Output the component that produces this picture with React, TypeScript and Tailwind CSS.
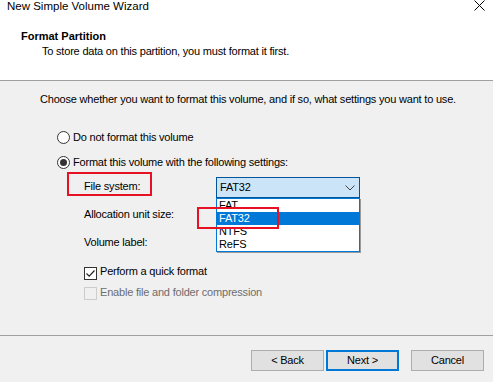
import React from 'react';

const items = ['FAT', 'FAT32', 'NTFS', 'ReFS'];

function Radio({ checked }: { checked?: boolean }) {
	return (
		<span className="w-[13px] h-[13px] rounded-full border border-[#333] bg-white flex items-center justify-center shrink-0">
			{checked && <span className="w-[7px] h-[7px] rounded-full bg-[#333]" />}
		</span>
	);
}

function Check({ checked, disabled }: { checked?: boolean; disabled?: boolean }) {
	return (
		<span
			className={
				disabled
					? 'block w-[13px] h-[13px] border border-[#cccccc] bg-[#f0f0f0] shrink-0'
					: 'flex w-[13px] h-[13px] border border-[#333] bg-white shrink-0 items-center justify-center'
			}
		>
			{checked && (
				<svg width="11" height="11" viewBox="0 0 11 11">
					<path d="M1.5 5.5 L4.2 8.2 L9.5 2.5" fill="none" stroke="#222" strokeWidth="1.2" />
				</svg>
			)}
		</span>
	);
}

export default function App() {
	return (
		<div
			className="relative w-[493px] h-[382px] overflow-hidden bg-[#f0f0f0] text-[11px] leading-[13px] tracking-[-0.2px] text-black flex flex-col"
			style={{ fontFamily: '"Liberation Sans", Arial, sans-serif' }}
		>
			<header className="bg-white h-[81px] border-b border-[#a0a0a0] shrink-0">
				<div className="flex justify-between items-start pl-[7px] pr-[8px] h-[13px]">
					<span className="text-[11.5px] tracking-normal">New Simple Volume Wizard</span>
					<svg width="11" height="11" viewBox="0 0 11 11">
						<path d="M0.5 0.5 L10.5 10.5 M10.5 0.5 L0.5 10.5" stroke="#000" strokeWidth="1" />
					</svg>
				</div>
				<div className="pl-[21px] mt-[17px] font-bold tracking-normal">Format Partition</div>
				<div className="pl-[42px] mt-[2px]">To store data on this partition, you must format it first.</div>
			</header>

			<div className="pl-[40px] mt-[12px] whitespace-nowrap">
				Choose whether you want to format this volume, and if so, what settings you want to use.
			</div>

			<div className="flex items-center gap-[3px] pl-[57px] mt-[25px] h-[13px]">
				<Radio />
				<span>Do not format this volume</span>
			</div>
			<div className="flex items-center gap-[3px] pl-[57px] mt-[12px] h-[13px]">
				<Radio checked />
				<span>Format this volume with the following settings:</span>
			</div>

			<div className="flex items-start mt-[8px] pl-[84px]">
				<span className="mt-[3px] w-[132px]">File system:</span>
				<div className="relative w-[144px] h-[21px] border border-[#005499] bg-[#cce4f7] flex items-center justify-between pl-[3px] pr-[4px]">
					<span>FAT32</span>
					<svg width="10" height="6" viewBox="0 0 10 6">
						<path d="M0.5 0.5 L5 5 L9.5 0.5" fill="none" stroke="#444" strokeWidth="1" />
					</svg>
					<div className="absolute left-[-1px] top-[20px] w-[144px] h-[54px] border border-[#0078d7] bg-white shadow-[1px_1px_0_#9a9a9a] z-10">
						{items.map(it => (
							<div
								key={it}
								className={
									it === 'FAT32'
										? 'h-[13px] pl-[2px] bg-[#0078d7] text-white'
										: 'h-[13px] pl-[2px]'
								}
							>
								{it}
							</div>
						))}
					</div>
				</div>
			</div>

			<div className="pl-[84px] mt-[10px]">Allocation unit size:</div>
			<div className="pl-[84px] mt-[15px]">Volume label:</div>

			<div className="flex items-start gap-[3px] pl-[84px] mt-[16px] h-[13px]">
				<span className="block mt-[2px]"><Check checked /></span>
				<span>Perform a quick format</span>
			</div>
			<div className="flex items-start gap-[3px] pl-[84px] mt-[8px] h-[13px] text-[#6d6d6d]">
				<span className="block mt-[1px]"><Check disabled /></span>
				<span>Enable file and folder compression</span>
			</div>

			<footer className="mt-auto h-[47px] border-t border-[#a0a0a0] flex justify-end items-start pt-[14px] pr-[9px] shrink-0">
				<button className="w-[73px] h-[21px] bg-[#e1e1e1] border border-[#adadad] text-[11px]">&lt; Back</button>
				<button className="w-[73px] h-[21px] ml-[2px] bg-[#e1e1e1] border-2 border-[#0078d7] text-[11px]">Next &gt;</button>
				<button className="w-[73px] h-[21px] ml-[12px] bg-[#e1e1e1] border border-[#adadad] text-[11px]">Cancel</button>
			</footer>

			<div className="absolute left-[67px] top-[172px] w-[85px] h-[24px] border-2 border-[#e81123]" />
			<div className="absolute left-[197px] top-[207px] w-[82px] h-[22px] border-2 border-[#e81123] z-20" />
		</div>
	);
}
